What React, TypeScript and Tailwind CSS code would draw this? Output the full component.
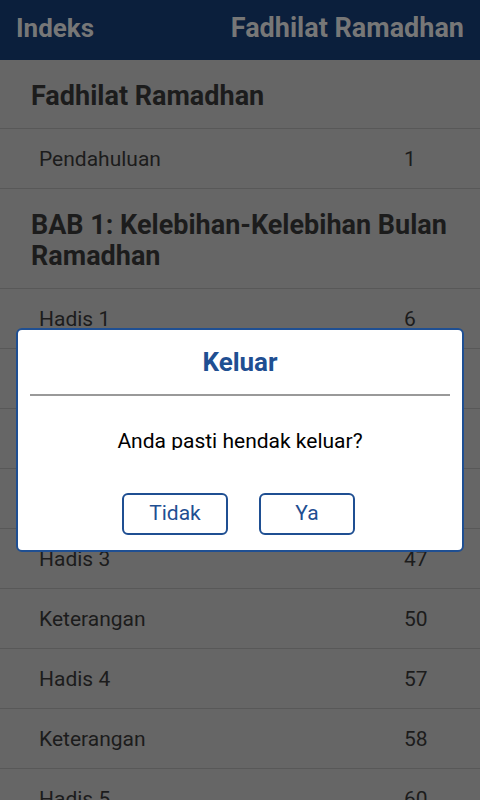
import React from "react";

type Item =
  | { kind: "section"; title: string }
  | { kind: "row"; title: string; page: string };

const items: Item[] = [
  { kind: "section", title: "Fadhilat Ramadhan" },
  { kind: "row", title: "Pendahuluan", page: "1" },
  { kind: "section", title: "BAB 1: Kelebihan-Kelebihan Bulan Ramadhan" },
  { kind: "row", title: "Hadis 1", page: "6" },
  { kind: "row", title: "Keterangan", page: "9" },
  { kind: "row", title: "Hadis 2", page: "36" },
  { kind: "row", title: "Keterangan", page: "38" },
  { kind: "row", title: "Hadis 3", page: "47" },
  { kind: "row", title: "Keterangan", page: "50" },
  { kind: "row", title: "Hadis 4", page: "57" },
  { kind: "row", title: "Keterangan", page: "58" },
  { kind: "row", title: "Hadis 5", page: "60" },
];

export default function App() {
  return (
    <div className="relative w-[480px] h-[800px] overflow-hidden bg-[#666666] font-['Roboto',sans-serif]">
      {/* Action bar */}
      <div className="h-[60px] bg-[#0b1f3c] flex items-center justify-between pl-4 pr-4 pb-[3px]">
        <span className="text-[26px] font-bold text-[#777777]">Indeks</span>
        <span className="text-[27px] font-bold text-[#777777]">Fadhilat Ramadhan</span>
      </div>

      {/* Index list (dimmed) */}
      <div className="flex flex-col">
        {items.map((it, i) =>
          it.kind === "section" ? (
            <div
              key={i}
              className="border-b border-[#585858] pl-[31px] pr-[16px] pt-[21px] pb-[16px] text-[27px] leading-[31px] font-bold text-[#1c1c1c]"
            >
              {it.title}
            </div>
          ) : (
            <div
              key={i}
              className="h-[60px] border-b border-[#585858] flex items-center pl-[39px] pt-[3px] text-[21px] text-[#1c1c1c]"
            >
              <span className="flex-1">{it.title}</span>
              <span className="w-[76px]">{it.page}</span>
            </div>
          )
        )}
      </div>

      {/* Exit dialog */}
      <div className="absolute left-4 top-[328px] w-[448px] h-[224px] bg-white border-2 border-[#1f4f92] rounded-[6px] flex flex-col items-center">
        <div className="pt-[14px] text-[26px] font-bold text-[#1f4f92] leading-[36px]">Keluar</div>
        <div className="mt-[14px] w-[420px] h-[2px] bg-[#999999]" />
        <div className="mt-[31px] h-[23px] overflow-hidden text-[21px] leading-[28px] text-black">
          Anda pasti hendak keluar?
        </div>
        <div className="mt-[43px] mr-[3px] flex gap-[31px]">
          <button className="w-[106px] h-[42px] border-2 border-[#1f4f92] rounded-[6px] text-[21px] text-[#1f4f92]">
            Tidak
          </button>
          <button className="w-[96px] h-[42px] border-2 border-[#1f4f92] rounded-[6px] text-[21px] text-[#1f4f92]">
            Ya
          </button>
        </div>
      </div>
    </div>
  );
}
